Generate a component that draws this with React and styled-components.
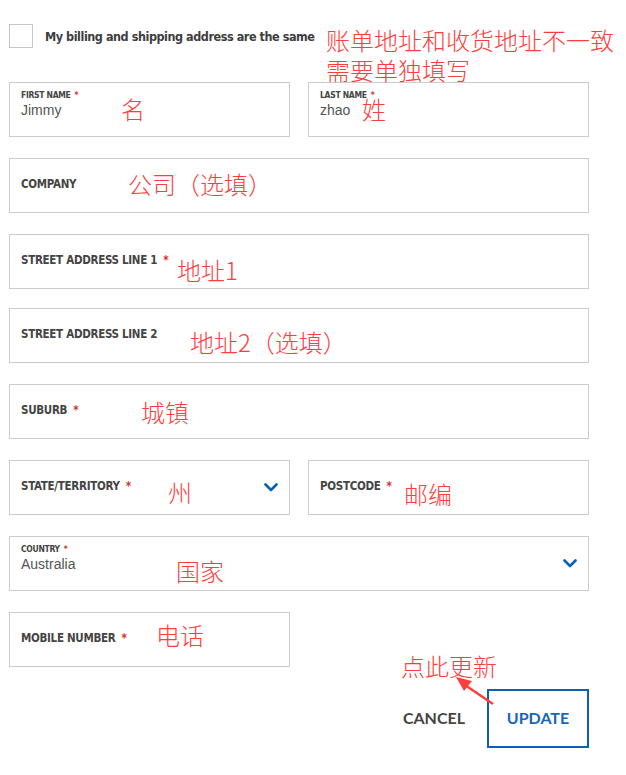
import React from "react";
import styled, { createGlobalStyle } from "styled-components";

const GlobalStyle = createGlobalStyle`
  body {
    margin: 0;
    background: #ffffff;
    font-family: "Liberation Sans", Arial, sans-serif;
  }
  * { box-sizing: border-box; }
`;

const Page = styled.div`
  position: relative;
  width: 589px;
  padding: 24px 0 28px 9px;
`;

const SameRow = styled.label`
  display: flex;
  align-items: center;
  gap: 12px;
  height: 24px;
  margin-bottom: 34px;
`;

const CheckBox = styled.span`
  width: 24px;
  height: 24px;
  border: 1px solid #c6c6c6;
  background: #fff;
`;

const SameText = styled.span`
  font-family: "DejaVu Sans Condensed", "DejaVu Sans", sans-serif;
  font-weight: 700;
  font-size: 12.5px;
  letter-spacing: -0.45px;
  color: #3d3d3d;
`;

const Form = styled.div`
  display: flex;
  flex-direction: column;
  gap: 21px;
`;

const Row = styled.div`
  display: grid;
  grid-template-columns: ${(p) => (p.$cols === 2 ? "1fr 1fr" : p.$half ? "281px" : "1fr")};
  column-gap: 18px;
  margin-top: ${(p) => (p.$tight ? "-2px" : "0")};
`;

const FieldBox = styled.div`
  height: 55px;
  border: 1px solid #cccccc;
  background: #fff;
  padding: 0 11px;
  display: flex;
  align-items: ${(p) => (p.$filled ? "flex-start" : "center")};
  justify-content: space-between;
`;

const Content = styled.div`
  display: flex;
  flex-direction: column;
  align-items: flex-start;
  padding-top: ${(p) => (p.$filled ? "7px" : "0")};
  margin-top: ${(p) => (p.$filled ? "0" : "-2px")};
`;

const BigLabel = styled.div`
  font-family: "DejaVu Sans Condensed", "DejaVu Sans", sans-serif;
  font-weight: 700;
  font-size: 11.5px;
  letter-spacing: -0.3px;
  line-height: 15px;
  color: #444444;
`;

const SmallLabel = styled.div`
  font-family: "DejaVu Sans Condensed", "DejaVu Sans", sans-serif;
  font-weight: 700;
  font-size: 8.5px;
  letter-spacing: -0.3px;
  line-height: 11px;
  color: #444444;
`;

const Req = styled.span`
  color: #d0312d;
  margin-left: ${(p) => (p.$small ? "4px" : "6px")};
`;

const Value = styled.div`
  font-family: "Liberation Sans", Arial, sans-serif;
  font-size: 14px;
  line-height: 18px;
  color: #555555;
`;

const Chevron = styled.svg`
  width: 14px;
  height: 9px;
  flex-shrink: 0;
  align-self: center;
`;

const Actions = styled.div`
  display: flex;
  justify-content: flex-end;
  align-items: center;
  margin-top: 22px;
`;

const TextButton = styled.button`
  font-family: Lato, "Liberation Sans", sans-serif;
  font-weight: 700;
  font-size: 16px;
  color: #444444;
  background: none;
  border: none;
  padding: 0 22px 3px;
  height: 59px;
  cursor: pointer;
`;

const OutlineButton = styled(TextButton)`
  width: 102px;
  padding: 0 0 3px;
  color: #1766b9;
  border: 2px solid #0b5fb5;
`;

const Note = styled.div`
  position: absolute;
  left: ${(p) => p.$x}px;
  top: ${(p) => p.$y}px;
  font-family: "Noto Sans CJK SC", sans-serif;
  font-weight: 300;
  font-size: 24px;
  line-height: 24px;
  color: #ff3d3d;
  white-space: nowrap;
  pointer-events: none;
`;

const Arrow = styled.svg`
  position: absolute;
  left: 450px;
  top: 672px;
  width: 50px;
  height: 40px;
  pointer-events: none;
`;

const ChevronIcon = () => (
  <Chevron viewBox="0 0 14 9">
    <path d="M1.5 1.5 L7 7 L12.5 1.5" fill="none" stroke="#0b5fb5" strokeWidth="2.6" strokeLinecap="round" strokeLinejoin="round" />
  </Chevron>
);

const Field = ({ label, value, required, select }) => {
  const filled = value !== undefined;
  return (
    <FieldBox $filled={filled}>
      <Content $filled={filled}>
        {filled ? (
          <>
            <SmallLabel>
              {label}
              {required && <Req $small>*</Req>}
            </SmallLabel>
            <Value>{value}</Value>
          </>
        ) : (
          <BigLabel>
            {label}
            {required && <Req>*</Req>}
          </BigLabel>
        )}
      </Content>
      {select && <ChevronIcon />}
    </FieldBox>
  );
};

const notes = [
  { x: 326, y: 28, text: "账单地址和收货地址不一致" },
  { x: 326, y: 58, text: "需要单独填写" },
  { x: 121, y: 97, text: "名" },
  { x: 362, y: 97, text: "姓" },
  { x: 128, y: 172, text: "公司（选填）" },
  { x: 177, y: 258, text: "地址1" },
  { x: 190, y: 330, text: "地址2（选填）" },
  { x: 141, y: 400, text: "城镇" },
  { x: 168, y: 480, text: "州" },
  { x: 404, y: 482, text: "邮编" },
  { x: 176, y: 559, text: "国家" },
  { x: 156, y: 623, text: "电话" },
  { x: 401, y: 654, text: "点此更新" },
];

export default function App() {
  return (
    <>
      <GlobalStyle />
      <Page>
        <SameRow>
          <CheckBox />
          <SameText>My billing and shipping address are the same</SameText>
        </SameRow>
        <Form>
          <Row $cols={2}>
            <Field label="FIRST NAME" value="Jimmy" required />
            <Field label="LAST NAME" value="zhao" required />
          </Row>
          <Row>
            <Field label="COMPANY" />
          </Row>
          <Row>
            <Field label="STREET ADDRESS LINE 1" required />
          </Row>
          <Row $tight>
            <Field label="STREET ADDRESS LINE 2" />
          </Row>
          <Row>
            <Field label="SUBURB" required />
          </Row>
          <Row $cols={2}>
            <Field label="STATE/TERRITORY" required select />
            <Field label="POSTCODE" required />
          </Row>
          <Row>
            <Field label="COUNTRY" value="Australia" required select />
          </Row>
          <Row $half>
            <Field label="MOBILE NUMBER" required />
          </Row>
        </Form>
        <Actions>
          <TextButton>CANCEL</TextButton>
          <OutlineButton>UPDATE</OutlineButton>
        </Actions>

        {notes.map((n) => (
          <Note key={n.text} $x={n.x} $y={n.y}>
            {n.text}
          </Note>
        ))}
        <Arrow viewBox="0 0 50 40">
          <line x1="43" y1="32" x2="12" y2="11" stroke="#ff3d3d" strokeWidth="2.5" />
          <polygon points="6,5 22,9 14,19" fill="#ff3d3d" />
        </Arrow>
      </Page>
    </>
  );
}
